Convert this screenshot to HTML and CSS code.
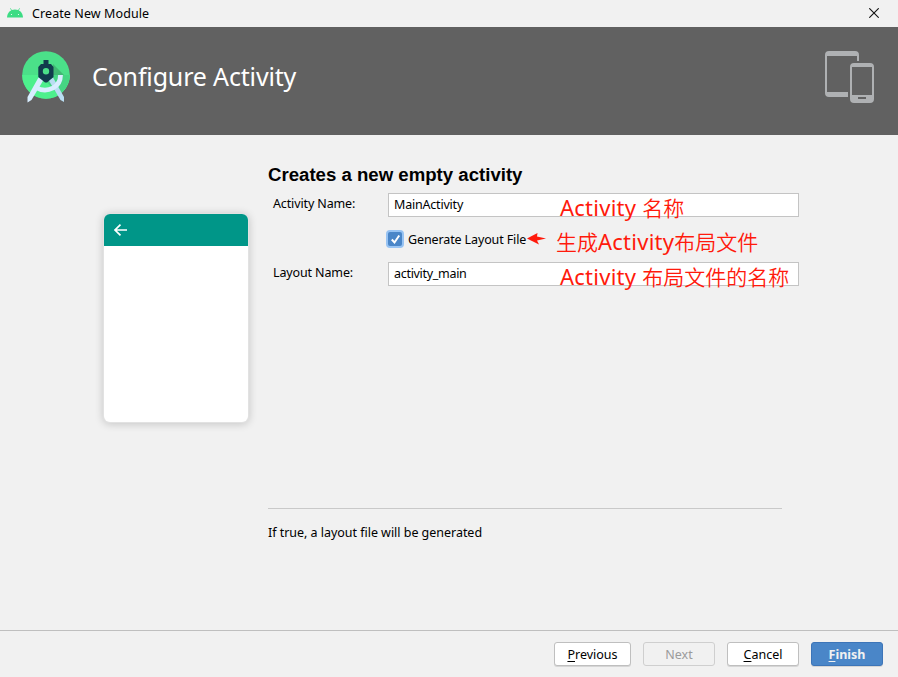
FILE: index.html
```html
<!DOCTYPE html>
<html lang="en">
<head>
<meta charset="utf-8">
<title>Create New Module</title>
<link rel="stylesheet" href="styles.css">
</head>
<body>
<div class="dialog">
  <div class="titlebar">
    <svg class="android" width="16" height="10" viewBox="0 0 16 10"><path d="M3.400.3 5 3M12.600.3 11 3" stroke="#3ddc84" stroke-width=".8"/><path d="M0 9.500C.3 4.500 3.600 1.600 8 1.600s7.700 2.900 8 7.900z" fill="#3ddc84"/><circle cx="4.500" cy="6.500" r=".6" fill="#fff"/><circle cx="11.500" cy="6.500" r=".6" fill="#fff"/></svg>
    <span class="caption">Create New Module</span>
    <svg class="close" width="10" height="10" viewBox="0 0 10 10"><path d="M.3.300 9.700 9.700M9.700.3.3 9.700" stroke="#111" stroke-width="1.100"/></svg>
  </div>
  <header class="banner">
    <svg class="logo" width="48" height="53" viewBox="0 0 48 53">
      <circle cx="24" cy="24" r="23.800" fill="#4be089"/>
      <path d="M.2 24a23.800 23.800 0 0 0 47.600 0z" fill="#4df08d"/>
      <path d="M31 14 41 24h6.800A24 24 0 0 1 36 44L24 30z" fill="#45d583"/>
      <path d="M31 13 42 24H31z" fill="#40b873"/>
      <path d="M26.500 29l4.500-2.500L42 46v5l-3.500-2z" fill="#b9ddf2"/>
      <path d="M16.500 26.500 21.500 29 9.500 49 5.500 51.500V46z" fill="#d8edff"/>
      <path d="M14 36.500Q22.500 41.500 31 37 38.500 33 38.500 24" fill="none" stroke="#d8edff" stroke-width="4.800"/>
      <path fill-rule="evenodd" d="M21.500 9h5v4H29l2.500 3v10L25 31.500h-2L16.300 26V16l2.700-3h2.500zM24 17a3.200 3.200 0 1 0 0 6.400A3.200 3.200 0 0 0 24 17z" fill="#113b4d"/>
    </svg>
    <h1>Configure Activity</h1>
    <svg class="devices" width="49" height="52" viewBox="0 0 49 52" fill="#afb1b3">
      <path fill-rule="evenodd" d="M4 0h26a4 4 0 0 1 4 4v6h-2V5H2v36h21v5H4a4 4 0 0 1-4-4V4a4 4 0 0 1 4-4z"/>
      <path fill-rule="evenodd" d="M29 12h16a4 4 0 0 1 4 4v32a4 4 0 0 1-4 4H29a4 4 0 0 1-4-4V16a4 4 0 0 1 4-4zM27 16v28h20V16zM33 46v2h8v-2z"/>
    </svg>
  </header>
  <main class="content">
    <div class="preview">
      <div class="appbar"><svg width="13" height="12" viewBox="0 0 13 12"><path d="M6.500.6 1 6l5.500 5.400M1 6h12" fill="none" stroke="#fff" stroke-width="1.700"/></svg></div>
    </div>
    <section class="settings">
      <h2>Creates a new empty activity</h2>
      <div class="row"><span class="label">Activity Name:</span><div class="field">MainActivity</div><span class="note n1">Activity <b>名称</b></span></div>
      <div class="checkrow"><span class="check"><svg width="13" height="13" viewBox="0 0 13 13"><path d="M2.800 6.500 5.500 9.500 10.200 2.500" fill="none" stroke="#fff" stroke-width="2"/></svg></span><span class="gen">Generate Layout File</span>
        <svg class="arrow" width="19" height="12" viewBox="0 0 19 12"><path d="M0 5.500 10.500 0 10 3.500 19 5.500 10 7.500 12 11.500z" fill="#ff1a0c"/></svg><span class="note n2"><b>生成</b>Activity<b>布局文件</b></span></div>
      <div class="row"><span class="label">Layout Name:</span><div class="field under">activity_main</div><span class="note n3">Activity <b>布局文件的名称</b></span></div>
      <p class="help">If true, a layout file will be generated</p>
    </section>
  </main>
  <footer class="actions">
    <button class="prev"><u>P</u>revious</button><button disabled>Next</button><button><u>C</u>ancel</button><button class="primary"><u>F</u>inish</button>
  </footer>
</div>
</body>
</html>
```
FILE: styles.css
```css
* { box-sizing: border-box; }
body { margin: 0; background: #f1f1f1; color: #000; font: 12.5px/18px "Noto Sans", "Noto Sans CJK SC", sans-serif; }
.dialog { width: 898px; height: 677px; display: flex; flex-direction: column; overflow: hidden; }
.titlebar { height: 27px; flex: none; display: flex; align-items: center; padding: 0 19px 0 7px; }
.android { margin: 0 9px 1px 0; }
.close { margin-bottom: 1px; }
.caption { flex: 1; letter-spacing: .09px; }
.banner { height: 108px; flex: none; background: #616161; display: flex; align-items: flex-start; padding: 24px 24px 0 22px; color: #fff; }
h1 { flex: 1; margin: 7px 0 0 22px; font-size: 25px; line-height: 36px; font-weight: 400; letter-spacing: -.16px; }
.content { flex: 1; display: flex; align-items: flex-start; padding: 30px 0 0 104px; }
.preview { width: 144px; height: 208px; margin-top: 49px; border-radius: 6px; background: #fff; overflow: hidden; box-shadow: 0 0 0 1px #e2e2e2, 0 1px 8px 1px #00000030; }
.appbar { height: 32px; background: #009688; padding: 10px; line-height: 0; }
.settings { width: 531px; margin-left: 20px; display: flex; flex-direction: column; }
h2 { margin: 0 0 8px; font: bold 18.62px/20px "Liberation Sans", Arial, sans-serif; }
.row { position: relative; display: flex; height: 24px; padding-left: 5px; }
.label { width: 115px; line-height: 21px; letter-spacing: -.13px; }
.field { width: 411px; height: 24px; background: #fff; border: 1px solid #c4c4c4; padding-left: 5px; line-height: 22px; letter-spacing: -.2px; }
.under { letter-spacing: -.3px; }
.checkrow { position: relative; height: 45px; display: flex; align-items: center; padding-left: 118px; }
.check { width: 18px; height: 18px; margin-bottom: 1px; border-radius: 4px; background: #4a86c8; border: 2.5px solid #97c3f3; display: grid; place-items: center; margin-right: 4px; }
.gen { letter-spacing: -.12px; }
.arrow { margin-left: 1px; margin-bottom: 1px; }
.note { position: absolute; color: #ff1a0c; font-size: 22px; line-height: 28px; letter-spacing: .25px; white-space: nowrap; }
.note b { font-family: "Noto Sans CJK SC", sans-serif; font-size: 21px; font-weight: 350; letter-spacing: 0; }
.n1, .n3 { left: 292px; top: 0; }
.n2 { left: 288px; top: 10px; }
.help { width: 514px; margin: 222px 0 0; padding-top: 15px; border-top: 1px solid #c9c9c9; letter-spacing: -.03px; }
.actions { height: 47px; flex: none; border-top: 1px solid #bfbfbf; display: flex; justify-content: flex-end; gap: 12px; padding: 11px 15px 0 0; }
button { width: 72px; height: 24px; padding: 1px 0 0; border: 1px solid #bfbfbf; border-radius: 3px; background: #fff; color: #000; font: inherit; box-shadow: 0 1px 0 #d6d6d6; }
.prev { width: 77px; }
button:disabled { background: #f1f1f1; border-color: #cfcfcf; color: #9b9b9b; box-shadow: none; }
.primary { background: #4a86c8; border-color: #3d75b8; color: #f1f1f1; font-weight: 700; }
u { text-underline-offset: 2px; }
```
